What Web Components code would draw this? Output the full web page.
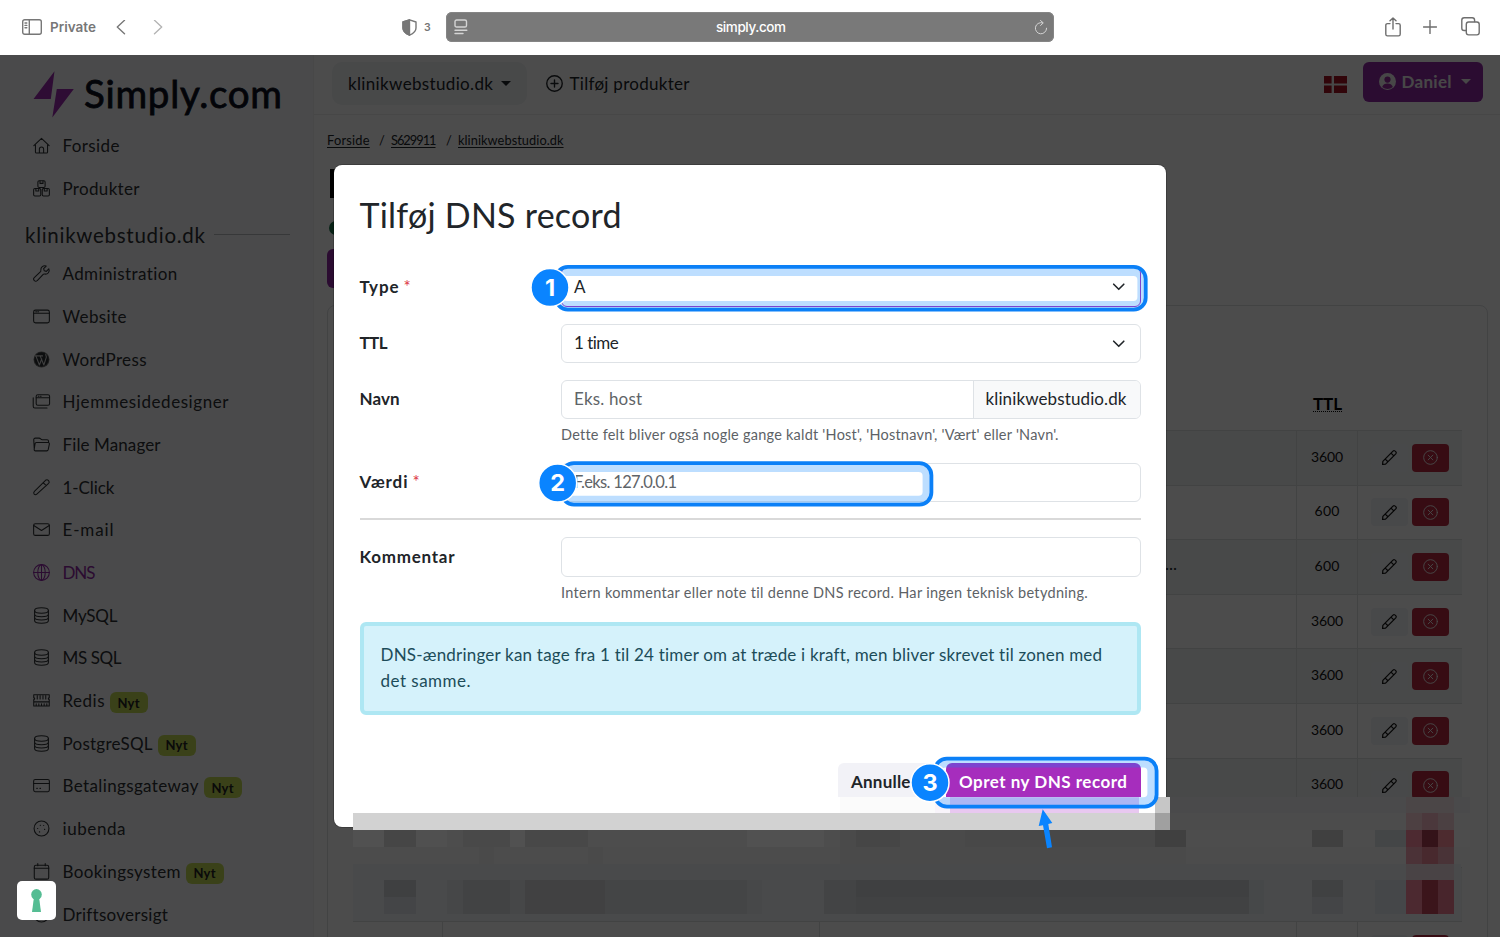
<!DOCTYPE html>
<html lang="da">
<head>
<meta charset="utf-8">
<title>Simply.com</title>
<style>
  html, body { margin: 0; height: 937px; overflow: hidden; background: #fff; }
  body {
    font-family: "Lato", "Open Sans", sans-serif;
    font-size: 17px;
    color: #212529;
    --primary: #a62dbd;
    --mark: #0a84ff;
  }
</style>
</head>
<body>
<simply-app></simply-app>

<script>
const ICONS = {
  house: '<path d="M2.3 7.2V14c0 .6.4 1 1 1h9.4c.6 0 1-.4 1-1V7.2M.8 8.2 8 1.2l7.2 7M6 15v-3.6c0-2.6 4-2.6 4 0V15"/>',
  boxes: '<rect x="4.6" y=".7" width="6.8" height="6.3" rx="1.2"/><rect x=".6" y="8" width="6.7" height="7" rx="1.2"/><rect x="8.7" y="8" width="6.7" height="7" rx="1.2"/><path d="M6.6 1v2.2h2.8V1M2.7 8v2.4h2.7V8M10.6 8v2.4h2.7V8"/>',
  wrench: '<path d="M14.9 3.6 12.6 6l-2-.5-.6-2L12.4 1C9.700 0 7 2 7.400 5.100c.1.500 0 .9-.3 1.200L1.200 11.800c-.9.8-.9 2 0 2.800.8.9 2 .9 2.800 0l5.600-5.800c.3-.3.8-.4 1.200-.3 3.200.5 5.300-2.100 4.100-4.900z"/>',
  window: '<rect x=".6" y="2" width="14.8" height="12" rx="1.8"/><path d="M.6 5h14.800M2.600 3.500h.8M4.500 3.500h.8"/>',
  stack: '<rect x="3" y="1.600" width="12.600" height="10" rx="1.500"/><path d="M3 4.400h12.600M5 3h.6M7 3h.6M.2 4.500v8c0 1 .6 1.700 1.600 1.700h11.400"/>',
  folder: '<path d="M1.200 12.500.7 3.600c0-1 .5-1.600 1.500-1.600h3.500c1.500 0 1.500 1.500 3 1.500h4.500c.8 0 1.400.5 1.400 1.300v1M3.200 6.200h11c.9 0 1.400.6 1.200 1.400l-1.100 5.300c-.2.8-.7 1.100-1.400 1.100H2.300c-.9 0-1.300-.6-1.200-1.400l.8-5.200c.1-.8.6-1.200 1.300-1.200z"/>',
  magic: '<path d="M11.800 1.200 1.300 11.700c-.8.8-.8 1.700-.2 2.500.8.800 1.700.700 2.500 0L14.700 4.100c.7-.7.8-1.500.1-2.400-.8-.9-2.100-1.200-3-.5zM9.500 3.500l3 2.800"/>',
  mail: '<rect x=".6" y="2.500" width="14.800" height="11" rx="1.600"/><path d="M.7 4.300 8 9l7.300-4.700"/>',
  globe: '<circle cx="8" cy="8" r="7.400"/><ellipse cx="8" cy="8" rx="3.500" ry="7.400"/><path d="M8 .6v14.800M.6 8h14.800"/>',
  db: '<ellipse cx="8" cy="3.300" rx="6.500" ry="2.600"/><path d="M1.500 3.300v9.400c0 3.500 13 3.500 13 0V3.300M1.500 6.500c0 3.500 13 3.500 13 0M1.500 9.600c0 3.500 13 3.500 13 0"/>',
  memory: '<path d="M.7 2.500h14.600v3c-1.200 0-1.200 1.500 0 1.500v6.200H.7V7c1.200 0 1.200-1.500 0-1.500zM.7 9.300h14.600M4 3.500v3M6.700 3.500v3M9.400 3.500v3M12 3.500v3M3 11v2M5.500 11v2M8 11v2M10.500 11v2M13 11v2"/>',
  card: '<rect x=".6" y="2.300" width="14.800" height="11.500" rx="1.500"/><path d="M.6 6.200h14.800M3.500 10.700h.6M6.500 10.700h.6"/>',
  cookie: '<circle cx="8" cy="8" r="7"/><path d="M6.800 5h.3M10.800 8.800h.3M4.300 8h.2M6 11.200h.3M10 5.200h.1"/>',
  calendar: '<rect x="1.200" y="2.200" width="13.600" height="13" rx="1.600"/><path d="M1.200 5h13.600M4.500.5v2M11.500.5v2"/>',
  pulse: '<circle cx="8" cy="8" r="7"/>',
  wordpress: '<g stroke="none"><circle cx="8" cy="8" r="7.500" fill="#777"/><circle cx="8" cy="8" r="6.800" fill="currentColor"/></g><path stroke="#d4d4d4" d="M2.800 4.800 6 13.200 8.200 7.500M6.800 4.800 10.200 13.200 12.500 6c.3-1-.6-1.800-.5-2.800M2.300 4.600h3M6 4.600h3"/>',
  plus: '<circle cx="8" cy="8" r="7.300"/><path d="M8 4.700v6.600M4.700 8h6.600"/>',
  pencil: '<path d="M11.700 1.200.9 12.200.6 15.400l3.200-.4L14.700 4.200c.8-.9.7-1.700 0-2.400-.8-1.100-2-1.400-3-.6zM9.600 3.300l3 3M4 10.200l1.800 1.800"/>',
  cross: '<circle cx="8" cy="8" r="7.300"/><path d="M5.500 5.500l5 5M10.500 5.500l-5 5"/>',
  chevron: '<path d="m2 5 6 6 6-6"/>',
  person: '<g stroke="none"><circle cx="8" cy="8" r="8" fill="currentColor"/><circle cx="8" cy="6.200" r="2.900" fill="#96289f"/><path d="M3 13.200c1.200-4.300 8.800-4.300 10 0-2.800 2.400-7.200 2.400-10 0z" fill="#96289f"/></g>'
};

class UiIcon extends HTMLElement {
  connectedCallback() {
    const size = this.getAttribute("size") || 17;
    this.attachShadow({ mode: "open" }).innerHTML = `
      <style>
        :host { display: inline-flex; flex: none; width: ${size}px; height: ${size}px; }
        svg { width: 100%; height: 100%; overflow: visible; fill: none; stroke: currentColor;
          stroke-width: ${this.getAttribute("stroke") || 1}; stroke-linecap: round; stroke-linejoin: round; }
      </style>
      <svg viewBox="0 0 16 16">${ICONS[this.getAttribute("name")]}</svg>`;
  }
}

// Spreads the letters of a one-line label over a set width
class FitText extends HTMLElement {
  connectedCallback() {
    const w = Number(this.getAttribute("w"));
    this.attachShadow({ mode: "open" }).innerHTML = `
      <style>
        :host { display: inline-block; flex: none; width: ${w}px; white-space: nowrap; }
      </style><span><slot></slot></span>`;
    const span = this.shadowRoot.querySelector("span");
    const natural = span.getBoundingClientRect().width;
    const count = this.textContent.length;
    if (natural && count > 1) span.style.letterSpacing = (w - natural) / (count - 1) + "px";
  }
}

class BrowserBar extends HTMLElement {
  connectedCallback() {
    this.attachShadow({ mode: "open" }).innerHTML = `
      <style>
        :host { display: grid; grid-template-columns: 446px 608px 1fr; align-items: center; height: 55px;
          box-sizing: border-box; padding-bottom: 1px; background: #fff; color: #6e6e6e; font-family: "Inter", sans-serif; }
        .left, .right, .address { display: flex; align-items: center; }
        svg { fill: none; stroke: currentColor; stroke-width: 1.4; stroke-linecap: round; stroke-linejoin: round; flex: none; }
        .left { padding-left: 22px; font-size: 13.500px; font-weight: 600; color: #777; }
        .left fit-text { margin-left: 8px; }
        .address { height: 29.500px; background: #797979; box-shadow: inset 0 0 0 1px #858585; border-radius: 6px; justify-content: space-between;
          padding: 0 6px 0 8px; box-sizing: border-box; color: #fff; font-size: 13.500px; font-weight: 500; }
        .address svg { color: #d4d4d4; }
        .right { justify-content: flex-end; padding: 0 20px 1px 0; gap: 22px; }
      </style>
      <div class="left">
        <svg width="20" height="16" viewBox="0 0 20 16"><rect x=".7" y=".7" width="18.600" height="14.600" rx="2"/><path d="M7.300 1v14M3 4h1.800M3 6.400h1.800M3 8.800h1.800" /></svg>
        <fit-text w="46">Private</fit-text>
        <svg style="margin-left:19.5px" width="10" height="15" viewBox="0 0 10 15" stroke-width="1.600"><path d="M8.500.3 1.300 7.100l7.200 6.700"/></svg>
        <svg style="margin-left:27.5px;color:#b4b4b4" width="10" height="15" viewBox="0 0 10 15"><path d="m1.500.3 7.200 6.800-7.200 6.700"/></svg>
        <svg style="margin-left:239px" width="15" height="17" viewBox="0 0 15 17"><path d="M7.500.8 14 3v6c0 3.500-3 5.700-6.500 7.200C4 14.700 1 12.500 1 9V3z"/><path d="M7.500.8V16.200C4 14.700 1 12.500 1 9V3z" fill="currentColor"/></svg>
        <span style="margin-left:7px;font-size:10.500px">3</span>
      </div>
      <div class="address">
        <svg width="14" height="16" viewBox="0 0 14 16" stroke-width="1.300"><rect x="1" y="1" width="11.500" height="7" rx="1.600"/><path d="M1 11.200h11.800M1 14.500h8"/></svg>
        <fit-text w="70">simply.com</fit-text>
        <svg width="14" height="15" viewBox="0 0 14 15"><path d="M8.500 2.800A5.600 5.600 0 1 0 12.600 8.200M6.500.5l2.800 2.400-2.700 2.500" stroke-width="1"/></svg>
      </div>
      <div class="right">
        <svg width="16" height="20" viewBox="0 0 16 20" stroke-width="1.200"><path d="M5 6.600H2.500c-1 0-1.700.6-1.700 1.600v9c0 1 .6 1.700 1.700 1.700h11c1 0 1.700-.6 1.700-1.700v-9c0-1-.6-1.600-1.700-1.600H11M8 12V1M5 3.700 8 .9l3 2.800"/></svg>
        <svg width="14" height="14" viewBox="0 0 14 14"><path d="M7 .5v13M.5 7h13"/></svg>
        <svg style="margin-left:2px" width="19" height="19" viewBox="0 0 19 19"><rect x="5.300" y="5" width="12.900" height="12.900" rx="2.300"/><path d="M5 13.500H3.200C1.700 13.500.8 12.700.8 11.200V3.300C.8 1.700 1.700.8 3.200.8h8c1.500 0 2.400.9 2.400 2.400V4.500"/></svg>
      </div>`;
  }
}

class SideBar extends HTMLElement {
  connectedCallback() {
    const item = ([icon, text, w, badge]) => `
      <a class="item ${text === "DNS" ? "active" : ""}">
        <ui-icon name="${icon}"></ui-icon><fit-text w="${w}">${text}</fit-text>
        ${badge ? '<span class="badge"><fit-text w="22">Nyt</fit-text></span>' : ""}
      </a>`;
    const top = [["house", "Forside", 57], ["boxes", "Produkter", 77]];
    const items = [
      ["wrench", "Administration", 115], ["window", "Website", 64], ["wordpress", "WordPress", 84],
      ["stack", "Hjemmesidedesigner", 166], ["folder", "File Manager", 98], ["magic", "1-Click", 52],
      ["mail", "E-mail", 51], ["globe", "DNS", 33], ["db", "MySQL", 55], ["db", "MS SQL", 59],
      ["memory", "Redis", 42, 1], ["db", "PostgreSQL", 90, 1], ["card", "Betalingsgateway", 136, 1],
      ["cookie", "iubenda", 63], ["calendar", "Bookingsystem", 118, 1], ["pulse", "Driftsoversigt", 105]
    ];
    this.attachShadow({ mode: "open" }).innerHTML = `
      <style>
        :host { display: flex; flex-direction: column; width: 314px; box-sizing: border-box; flex: none;
          background: #f8f9fa; border-right: 1px solid #f0f2f0; color: #2c2f33; overflow: hidden; }
        .logo { display: flex; align-items: center; height: 69px; padding: 6px 0 0 33px; box-sizing: border-box; flex: none;
          color: #0b1020; font-size: 38.500px; font-weight: 400; }
        .logo svg { margin: 3px 9px 0 0; flex: none; }
        .logo fit-text { -webkit-text-stroke: .8px currentColor; }
        .item { display: flex; align-items: center; height: 42.700px; flex: none; padding-left: 33px; }
        .item ui-icon { margin-right: 12.500px; }
        .active { color: #9228a6; }
        .badge { display: inline-flex; align-items: center; height: 21px; padding: 0 8px; margin: 4px 0 0 5px;
          background: #c3da55; border-radius: 6px; font-size: 13px; font-weight: 700; color: #222; }
        h2 { display: flex; align-items: center; gap: 9px; height: 43px; margin: 0 23px 0 25px; flex: none;
          font-size: 20.500px; font-weight: 400; padding-top: 8px; box-sizing: border-box; }
        h2::after { content: ""; flex: 1; height: 1px; background: #b8bbbe; }
      </style>
      <div class="logo">
        <svg width="42" height="47" viewBox="0 0 42 47" fill="#9a2aae"><path d="M21.500.3.500 28h17.300zM23.800 18h17L19.300 46.500z"/></svg>
        <fit-text w="198">Simply.com</fit-text>
      </div>
      ${top.map(item).join("")}
      <h2><fit-text w="180">klinikwebstudio.dk</fit-text></h2>
      ${items.map(item).join("")}`;
  }
}

class TopBar extends HTMLElement {
  connectedCallback() {
    this.attachShadow({ mode: "open" }).innerHTML = `
      <style>
        :host { display: flex; align-items: center; height: 60px; box-sizing: border-box; flex: none;
          padding: 0 17px 2px 18px; border-bottom: 1px solid #eee; }
        .domain { display: flex; align-items: center; gap: 8px; width: 195px; height: 43px; padding-left: 16px;
          box-sizing: border-box; background: #f1f3f6; border-radius: 10px; margin-right: 19px; }
        .caret { border: 5px solid transparent; border-top-color: currentColor; border-bottom: 0; }
        .add { display: flex; align-items: center; gap: 6.500px; flex: 1; }
        .user { display: flex; align-items: center; width: 120px; height: 40px; margin: -3.500px 0 0 16px; padding-left: 16px;
          box-sizing: border-box; border-radius: 6px; background: #96289f; background: #9228a6; color: #eee; font-weight: 700; font-size: 17px; }
        .user fit-text { margin: 0 9px 0 5.500px; }
        .flag { margin-top: 2px; }
      </style>
      <div class="domain"><fit-text w="145">klinikwebstudio.dk</fit-text><i class="caret"></i></div>
      <div class="add"><ui-icon name="plus" stroke="1.300"></ui-icon><fit-text w="120">Tilføj produkter</fit-text></div>
      <svg class="flag" width="23" height="17" viewBox="0 0 23 17"><path fill="#a31222" d="M0 0h23v17H0z"/><path fill="#eee" d="M7.600 0h2.400v17H7.600zM0 7.400h23v2.200H0z"/></svg>
      <div class="user"><ui-icon name="person"></ui-icon><fit-text w="50">Daniel</fit-text><i class="caret"></i></div>`;
  }
}

class DnsTable extends HTMLElement {
  connectedCallback() {
    const ttl = [3600, 600, 600, 3600, 3600, 3600, 3600, "", "", ""];
    const row = (value, i) => `
      <div class="row">
        <span></span><span></span>
        <span class="value">${i === 2 ? "<u>...</u>" : ""}</span>
        <span class="ttl">${value ? `<fit-text w="${value > 999 ? 32 : 25}">${value}</fit-text>` : ""}</span>
        <span class="actions">
          <b class="edit"><ui-icon name="pencil" size="15" stroke="1.300"></ui-icon></b>
          <b class="delete"><ui-icon name="cross" size="15"></ui-icon></b>
        </span>
      </div>`;
    this.attachShadow({ mode: "open" }).innerHTML = `
      <style>
        :host { display: block; width: 1161px; box-sizing: border-box; height: 720px; flex: none; overflow: hidden;
          padding: 0 25px; border: 1px solid #dcdfe2; border-radius: 8px; }
        .head, .row { display: grid; grid-template-columns: 90px 377px 477px 61px 104px; }
        .head { height: 124px; font-weight: 700; color: #000; }
        .head fit-text { grid-column: 4; justify-self: center; align-self: end; height: 16px; line-height: 17px; margin-bottom: 18px;
          border-bottom: 1px dotted #000; }
        .row { height: 54.600px; box-sizing: border-box; border-top: 1px solid #dcdfe2; }
        .row > span { display: flex; align-items: center; border-right: 1px solid #dcdfe2; }
        .row > span:last-child { border-right: 0; }
        .row:nth-child(odd) { background: #f2f4f6; }
        .value { padding: 0 0 7px 345px; }
        .ttl { justify-content: center; font-size: 14px; color: #111; padding-bottom: 3px; }
        .actions { gap: 3.500px; padding-left: 13px; }
        .actions b { display: flex; align-items: center; justify-content: center; width: 37px; height: 28px; border-radius: 4px; }
        .edit { background: #f2f4f7; color: #111; }
        .delete { background: #b82a40; color: #eee; }
        u { text-decoration: none; }
      </style>
      <div class="head"><fit-text w="29">TTL</fit-text></div>
      ${ttl.map(row).join("")}`;
  }
}

class FormField extends HTMLElement {
  connectedCallback() {
    const w = this.getAttribute("label-width");
    this.attachShadow({ mode: "open" }).innerHTML = `
      <style>
        :host { display: grid; grid-template-columns: 201.500px 1fr; }
        .label { display: flex; align-items: center; gap: 5px; height: 39px; padding-bottom: 1.500px; box-sizing: border-box; font-weight: 700; }
        .label i { color: #dc3545; font-style: normal; font-weight: 400; }
      </style>
      <div class="label"><fit-text w="${w}">${this.getAttribute("label")}</fit-text>${this.hasAttribute("required") ? "<i>*</i>" : ""}</div>
      <div><slot></slot></div>`;
  }
}

class FormControl extends HTMLElement {
  connectedCallback() {
    this.attachShadow({ mode: "open" }).innerHTML = `
      <style>
        :host { display: flex; align-items: center; height: 39.500px; box-sizing: border-box; padding-left: 12px;
          border: 1px solid #dee2e6; border-radius: 6px; background: #fff; overflow: hidden; }
        :host([placeholder]) { color: #5f6468; }
        :host([focused]) { border-color: #a62dbd; }
        .main { flex: 1; display: flex; align-items: center; padding-bottom: 1.500px; }
        ui-icon { margin-right: 14px; color: #212529; }
        ::slotted([slot="suffix"]) { display: flex; align-items: center; align-self: stretch; box-sizing: border-box;
          padding: 0 0 1.500px 12px; width: 167px; border-left: 1px solid #dee2e6; background: #f8f9fa; color: #212529; }
      </style>
      <div class="main"><slot></slot></div>
      ${this.hasAttribute("select") ? '<ui-icon name="chevron" size="13.500" stroke="1.900"></ui-icon>' : ""}
      <slot name="suffix"></slot>`;
  }
}

class DnsModal extends HTMLElement {
  connectedCallback() {
    this.attachShadow({ mode: "open" }).innerHTML = `
      <style>
        :host { display: block; width: 832px; height: 662px; box-sizing: border-box; padding: 29px 25.500px 0;
          background: #fff; border-radius: 8px; box-shadow: 0 0 0 1px rgba(0,0,0,.2); }
        h1 { margin: 0; height: 43px; line-height: 41px; font-size: 34px; font-weight: 400; }
        form-field { margin-top: 16.800px; }
        h1 + form-field { margin-top: 30.300px; }
        .help { display: block; font-size: 14.500px; line-height: 18px; color: #5d6266; margin-top: 7px; height: 19.800px; }
        hr { margin: 16px 0 0; border: 0; height: 2px; background: #d9d9d9; }
        .alert { display: flex; flex-direction: column; height: 93px; box-sizing: border-box; margin-top: 18px; padding: 16px 17px;
          border: 4px solid #aee7f3; border-radius: 6px; background: #d5f2fb; color: #1c4c59; line-height: 26px; }
        .buttons { display: flex; justify-content: flex-end; gap: 8px; margin-top: 48px; font-weight: 700; }
        .buttons span { display: flex; align-items: center; height: 36px; padding: 1px 13.500px 0; border-radius: 6px 6px 0 0;
          box-sizing: border-box; }
        .cancel { background: #f2f2f7; width: 100px; }
        .save { background: var(--primary); color: #fff; width: 195px; }
      </style>
      <h1><fit-text w="262">Tilføj DNS record</fit-text></h1>
      <form-field label="Type" label-width="39" required><form-control select focused>A</form-control></form-field>
      <form-field label="TTL" label-width="28"><form-control select><fit-text w="45">1 time</fit-text></form-control></form-field>
      <form-field label="Navn" label-width="40">
        <form-control placeholder><fit-text w="68">Eks. host</fit-text><div slot="suffix"><fit-text w="141">klinikwebstudio.dk</fit-text></div></form-control>
        <span class="help"><fit-text w="497">Dette felt bliver også nogle gange kaldt 'Host', 'Hostnavn', 'Vært' eller 'Navn'.</fit-text></span>
      </form-field>
      <form-field label="Værdi" label-width="48" required><form-control placeholder style="font-size:16.5px"><fit-text w="103">F.eks. 127.0.0.1</fit-text></form-control></form-field>
      <hr>
      <form-field label="Kommentar" label-width="95">
        <form-control></form-control>
        <span class="help"><fit-text w="527">Intern kommentar eller note til denne DNS record. Har ingen teknisk betydning.</fit-text></span>
      </form-field>
      <div class="alert">
        <fit-text w="722">DNS-ændringer kan tage fra 1 til 24 timer om at træde i kraft, men bliver skrevet til zonen med</fit-text>
        <fit-text w="90">det samme.</fit-text>
      </div>
      <div class="buttons">
        <span class="cancel"><fit-text w="66">Annuller</fit-text></span>
        <span class="save"><fit-text w="168">Opret ny DNS record</fit-text></span>
      </div>`;
  }
}

// Pixelated strip: [x, y, width, height, colour] in page pixels
class PixelMosaic extends HTMLElement {
  connectedCallback() {
    const cells = [
      [353, 797, 802, 17, "#fff"], [840, 797, 95, 17, "#fbfbfb"], [935, 797, 15, 17, "#f8f4fa"], [950, 797, 189, 17, "#e8c8f0"],
      [1155, 797, 15, 17, "#c6c6c6"], [1170, 797, 300, 17, "#4a4a4b"],
      [353, 813, 802, 17, "#d2d2d2"], [1155, 813, 15, 17, "#a0a0a0"], [1170, 813, 300, 17, "#4c4c4c"],
      [353, 830, 1117, 17, "#4d4d4d"], [353, 830, 31, 17, "#515151"], [384, 830, 32, 17, "#464646"], [416, 830, 31, 17, "#505050"],
      [463, 830, 47, 17, "#494949"], [510, 830, 15, 17, "#515151"], [525, 830, 63, 17, "#484848"], [747, 830, 77, 17, "#515151"],
      [840, 830, 16, 17, "#4a4a4a"], [856, 830, 44, 17, "#464646"], [900, 830, 65, 17, "#4a4a4a"], [965, 830, 190, 17, "#484848"], [1155, 830, 31, 17, "#404040"],
      [353, 847, 1117, 17, "#4c4c4c"], [479, 847, 15, 17, "#4a4a4a"], [588, 847, 15, 17, "#4a4a4a"], [840, 847, 346, 17, "#4a4a4a"],
      [353, 864, 1108, 57, "#494a4b"],
      [384, 880, 32, 17, "#3f4041"], [384, 897, 32, 17, "#444547"], [447, 880, 16, 34, "#464748"], [463, 880, 47, 34, "#424344"],
      [510, 880, 15, 34, "#464748"], [525, 880, 80, 34, "#414142"], [605, 880, 142, 34, "#444546"], [747, 880, 15, 34, "#474849"],
      [824, 880, 32, 34, "#434445"], [856, 880, 393, 17, "#3f4041"], [856, 897, 393, 17, "#414243"], [1249, 880, 15, 34, "#464849"],
      [1312, 830, 31, 17, "#404040"], [1312, 880, 31, 17, "#404142"], [1312, 897, 31, 17, "#444547"],
      [1375, 830, 31, 17, "#444647"], [1375, 880, 31, 34, "#454749"],
      [1406, 797, 48, 17, "#4b4647"], [1406, 813, 16, 17, "#4d4042"], [1422, 813, 16, 17, "#4b383c"], [1438, 813, 16, 17, "#4b4042"],
      [1406, 830, 16, 17, "#4d2a31"], [1422, 830, 16, 17, "#341319"], [1438, 830, 16, 17, "#4d2b2f"],
      [1406, 847, 16, 17, "#4b3237"], [1422, 847, 16, 17, "#48292e"], [1438, 847, 16, 17, "#493337"],
      [1406, 864, 48, 16, "#494345"],
      [1406, 880, 16, 34, "#4c2930"], [1422, 880, 16, 34, "#3b151b"], [1438, 880, 16, 34, "#48252c"]
    ];
    this.attachShadow({ mode: "open" }).innerHTML = `
      <style>:host { display: block; } svg { display: block; }</style>
      <svg width="1117" height="124" viewBox="353 797 1117 124" shape-rendering="crispEdges">
        ${cells.map(([x, y, w, h, c]) => `<rect x="${x}" y="${y}" width="${w}" height="${h}" fill="${c}"/>`).join("")}
      </svg>`;
  }
}

// Numbered step marks and the pointer arrow, drawn over the page
class StepMarks extends HTMLElement {
  connectedCallback() {
    const box = (x, y, r, b, ix, iy, ir, ib) => `
      <path fill-rule="evenodd" fill="#0a84ff" fill-opacity=".27" d="${this.round(x + 3, y + 3, r - 3, b - 3, 11)} ${this.round(ix, iy, ir, ib, 4)}"/>
      <path fill="none" stroke="#0b80f7" stroke-width="3.800" d="${this.round(x + 1.9, y + 1.9, r - 1.9, b - 1.9, 12)}"/>`;
    const dot = (cx, cy, n) => `
      <circle cx="${cx}" cy="${cy}" r="19" fill="#0a84ff" stroke="#fff" stroke-width="1.500"/>
      <text x="${cx}" y="${cy + 8.3}">${n}</text>`;
    this.attachShadow({ mode: "open" }).innerHTML = `
      <style>
        :host { display: block; }
        svg { display: block; }
        text { font: 700 23.500px "Inter", sans-serif; fill: #fff; text-anchor: middle; }
      </style>
      <svg width="1500" height="937" viewBox="0 0 1500 937">
        ${box(554, 265, 1147.6, 311.6, 563, 276, 1137.4, 301)}
        ${box(560, 461.3, 933.3, 506.5, 568, 472, 922.6, 495.7)}
        ${box(933, 756.8, 1158.5, 808.6, 942, 767.6, 1147.4, 797.2)}
        ${dot(550, 287.6, 1)}${dot(557.7, 483, 2)}${dot(930, 782.7, 3)}
        <path fill="#0a84ff" d="M1042.700 809.300 1052.300 823 1048.300 824 1052 847.300 1047 848.300 1043 825.300 1038.700 826z"/>
      </svg>`;
  }

  round(x, y, r, b, q) {
    return `M${x + q} ${y}H${r - q}A${q} ${q} 0 0 1 ${r} ${y + q}V${b - q}A${q} ${q} 0 0 1 ${r - q} ${b}H${x + q}A${q} ${q} 0 0 1 ${x} ${b - q}V${y + q}A${q} ${q} 0 0 1 ${x + q} ${y}z`;
  }
}

class SimplyApp extends HTMLElement {
  connectedCallback() {
    this.attachShadow({ mode: "open" }).innerHTML = `
      <style>
        :host { display: block; position: relative; width: 1500px; height: 937px; overflow: hidden; }
        .page { display: flex; height: 882px; overflow: hidden; }
        main { flex: 1; min-width: 0; display: flex; flex-direction: column; }
        .crumbs { display: flex; gap: 9.500px; align-items: center; height: 17px; margin: 16px 0 0 13px; font-size: 12.800px; flex: none; }
        .crumbs fit-text { text-decoration: underline; text-underline-offset: 2px; }
        .crumbs i { font-style: normal; width: 3px; margin-right: -.5px; }
        .heading { display: grid; grid-template-rows: 29px 14px 39px; width: 500px; padding: 21px 0 0 13px; height: 157px; box-sizing: border-box; flex: none; }
        .stem { width: 8px; margin-left: 3px; background: #000; }
        .status { width: 14px; height: 14px; border-radius: 50%; margin: 23px 0 0 2px; background: #187048; }
        .button { width: 150px; height: 39px; margin-top: 37px; border-radius: 6px; background: #9228a6; }
        dns-table { margin-left: 13px; }
        .over { position: absolute; }
        .backdrop { inset: 55px 0 0; background: rgba(0,0,0,.7); }
        dns-modal { left: 334px; top: 165px; }
        pixel-mosaic { left: 353px; top: 797px; }
        step-marks { inset: 0; }
        .consent { left: 17px; top: 881px; width: 39px; height: 39px; border-radius: 5px; background: #fff;
          display: flex; align-items: center; justify-content: center; }
      </style>
      <browser-bar></browser-bar>
      <div class="page">
        <side-bar></side-bar>
        <main>
          <top-bar></top-bar>
          <div class="crumbs"><fit-text w="42.500">Forside</fit-text><i>/</i><fit-text w="45.500">S629911</fit-text><i>/</i><fit-text w="105.500">klinikwebstudio.dk</fit-text></div>
          <div class="heading"><div class="stem"></div><div class="status"></div><div class="button"></div></div>
          <dns-table></dns-table>
        </main>
      </div>
      <div class="over backdrop"></div>
      <dns-modal class="over"></dns-modal>
      <pixel-mosaic class="over"></pixel-mosaic>
      <step-marks class="over"></step-marks>
      <div class="over consent">
        <svg width="11" height="23" viewBox="0 0 11 23" fill="#55bd93"><circle cx="5.500" cy="5.400" r="5.300"/><path d="M3 8h5l2 15H1z"/></svg>
      </div>`;
  }
}

customElements.define("simply-app", SimplyApp);
customElements.define("browser-bar", BrowserBar);
customElements.define("side-bar", SideBar);
customElements.define("top-bar", TopBar);
customElements.define("dns-table", DnsTable);
customElements.define("dns-modal", DnsModal);
customElements.define("form-field", FormField);
customElements.define("form-control", FormControl);
customElements.define("pixel-mosaic", PixelMosaic);
customElements.define("step-marks", StepMarks);
customElements.define("ui-icon", UiIcon);
customElements.define("fit-text", FitText);
</script>
</body>
</html>
